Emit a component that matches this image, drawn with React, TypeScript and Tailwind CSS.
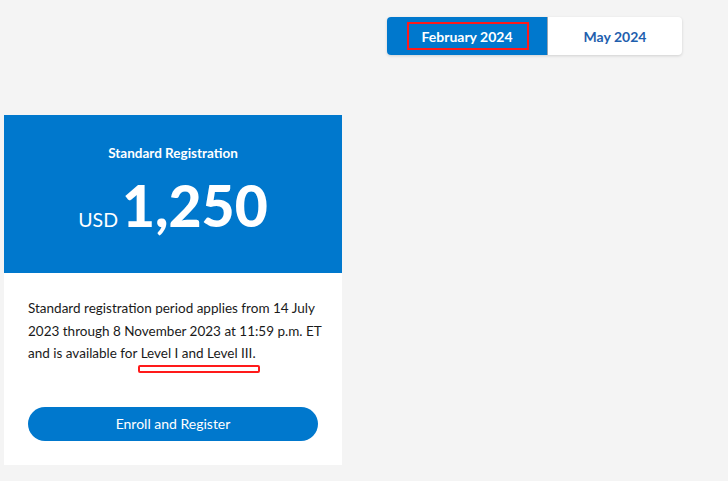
import React from "react";

export default function App() {
  return (
    <div className="min-h-[481px] w-[728px] bg-[#f4f4f4] overflow-hidden" style={{ fontFamily: "Lato, 'Liberation Sans', sans-serif" }}>
      <div className="flex pt-[17px] pl-[387px]">
        <div className="flex h-[38px] rounded-[4px] bg-white shadow-[0_1px_3px_rgba(0,0,0,0.15)] overflow-hidden">
          <div className="relative flex w-[161px] items-center justify-center bg-[#0078cd] text-[14px] font-bold text-white border-r border-[#9aa5b0]">
            February 2024
            <div className="absolute left-[20px] top-[5px] h-[28px] w-[122px] border-2 border-[#ff1a1a]" />
          </div>
          <div className="flex w-[134px] items-center justify-center text-[14px] font-bold text-[#1f5fae]">
            May 2024
          </div>
        </div>
      </div>
      <div className="ml-[4px] mt-[60px] w-[338px] bg-white">
        <div className="flex h-[158px] flex-col items-center bg-[#0078cd] text-white">
          <div className="mt-[30px] text-[13.5px] font-bold leading-[16px]">Standard Registration</div>
          <div className="mt-[12px] flex items-baseline">
            <span className="text-[19.5px] leading-none mr-[4px]">USD</span>
            <span className="text-[57px] font-black leading-[64px]">1,250</span>
          </div>
        </div>
        <div className="pl-[24px] pr-[24px] pt-[24px] pb-[24px]">
          <p className="w-[296px] text-[13.5px] leading-[22.5px] text-[#1a1a1a]">
            Standard registration period applies from 14 July 2023 through 8 November 2023 at 11:59 p.m. ET and is available for{" "}
            <span className="relative">
              Level I and Level III.
              <span className="absolute left-[-3px] top-[20px] h-[8px] w-[122px] rounded-[2px] border-2 border-[#ff1a1a]" />
            </span>
          </p>
          <button className="mt-[42px] flex h-[34px] w-[290px] items-center justify-center rounded-full bg-[#0078cd] text-[14px] text-white">
            Enroll and Register
          </button>
        </div>
      </div>
    </div>
  );
}
